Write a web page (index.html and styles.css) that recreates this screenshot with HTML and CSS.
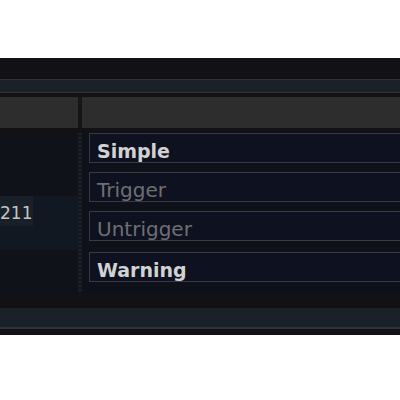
FILE: index.html
```html
<!DOCTYPE html>
<html lang="en">

<head>
    <meta charset="UTF-8">
    <meta name="viewport" content="width=device-width, initial-scale=1.0">
    <title>Trigger states</title>
    <link rel="stylesheet" href="styles.css">
</head>

<body>
    <div class="panel">
        <div class="toolbar"></div>
        <div class="header">
            <div class="col-left"></div>
            <div class="divider"></div>
            <div class="col-right"></div>
        </div>
        <div class="content">
            <div class="col-left">
                <div class="row-spacer"></div>
                <div class="row-selected">
                    <div class="cell">211</div>
                </div>
            </div>
            <div class="divider dotted"></div>
            <div class="col-right states">
                <div class="state bold">Simple</div>
                <div class="state muted">Trigger</div>
                <div class="state muted">Untrigger</div>
                <div class="state bold last">Warning</div>
            </div>
        </div>
        <div class="footer"></div>
    </div>
</body>

</html>
```

FILE: styles.css
```css
body {
    margin: 0;
    background-color: white;
    font-family: "DejaVu Sans", sans-serif;
}

.panel {
    margin-top: 58px;
    height: 277px;
    background-color: #111116;
    display: flex;
    flex-direction: column;
    overflow: hidden;
}

.toolbar {
    margin-top: 21px;
    height: 12px;
    background-color: #1b2129;
    border-top: 1px solid #2d323b;
    border-bottom: 1px solid #2d323b;
}

.header {
    margin-top: 4px;
    height: 31px;
    display: flex;
    background-color: #2d2d2d;
}

.col-left {
    width: 78px;
    flex-shrink: 0;
}

.divider {
    width: 4px;
    flex-shrink: 0;
    background-color: #15161b;
}

.col-right {
    flex: 1;
}

.content {
    margin-top: 5px;
    height: 160px;
    display: flex;
    background-color: #0e111a;
}

.content .col-left {
    background-color: #101219;
    display: flex;
    flex-direction: column;
}

.dotted {
    background: repeating-linear-gradient(#1d2027 0 2px, #14161c 2px 4px);
}

.row-spacer {
    height: 63px;
}

.row-selected {
    height: 54px;
    background-color: #121821;
}

.cell {
    width: 33px;
    height: 30px;
    box-sizing: border-box;
    padding-top: 2px;
    background-color: #19202a;
    color: #c4c4c4;
    font-size: 17px;
    line-height: 30px;
    white-space: nowrap;
}

.states {
    padding-left: 7px;
    display: flex;
    flex-direction: column;
    gap: 9px;
}

.state {
    height: 28px;
    box-sizing: content-box;
    margin-right: -10px;
    padding-left: 7px;
    border: 1px solid #3a3b41;
    background-color: #0e1220;
    line-height: 34px;
    overflow: hidden;
}

.last {
    margin-top: 2px;
}

.bold {
    font-size: 19px;
    font-weight: bold;
    color: #d2d2d2;
}

.muted {
    font-size: 20px;
    color: #6e6f72;
}

.footer {
    margin-top: 15px;
    height: 19px;
    background-color: #1b2129;
    border-bottom: 2px solid #2d323b;
}
```
